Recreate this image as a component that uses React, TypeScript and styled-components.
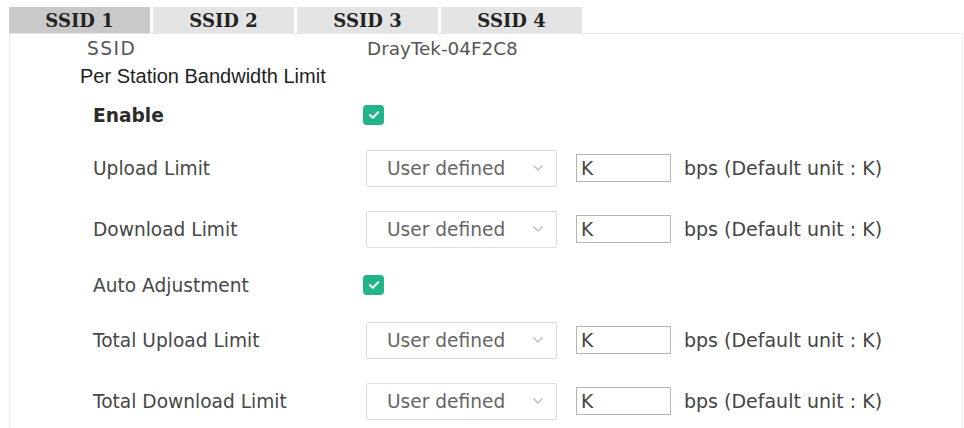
import React from "react";
import styled, { createGlobalStyle } from "styled-components";

const GlobalStyle = createGlobalStyle`
  html, body {
    margin: 0;
    padding: 0;
    background: #ffffff;
  }
  body {
    font-family: "DejaVu Sans", sans-serif;
    width: 964px;
    height: 428px;
    overflow: hidden;
  }
`;

const Page = styled.div`
  padding: 7px 2px 0 9px;
  box-sizing: border-box;
  height: 428px;
`;

const TabBar = styled.div`
  display: flex;
  gap: 3px;
  height: 26px;
`;

const Tab = styled.div<{ $active?: boolean }>`
  width: 141px;
  display: flex;
  align-items: center;
  justify-content: center;
  padding-top: 1px;
  background: ${(p) => (p.$active ? "#c9c9c9" : "#e4e4e4")};
  font-family: "DejaVu Serif", "Liberation Serif", serif;
  font-weight: 700;
  font-size: 18px;
  color: #222;
`;

const Panel = styled.div`
  border-top: 1px solid #e6e6e6;
  border-left: 1px solid #ececec;
  border-right: 1px solid #ececec;
  margin-right: -1px;
  height: 400px;
  box-sizing: border-box;
`;

const Row = styled.div<{ $h: number; $indent?: number }>`
  display: flex;
  align-items: center;
  height: ${(p) => p.$h}px;
  padding-left: ${(p) => p.$indent ?? 83}px;
`;

const Label = styled.div<{ $bold?: boolean }>`
  width: 273px;
  flex: none;
  font-size: 18.6px;
  font-weight: ${(p) => (p.$bold ? 700 : 400)};
  color: ${(p) => (p.$bold ? "#2b2b2b" : "#474747")};
`;

const SsidLabel = styled.div`
  width: 280px;
  font-size: 18.6px;
  letter-spacing: 1.5px;
  color: #555;
`;

const SsidValue = styled.div`
  font-size: 18.4px;
  color: #555;
`;

const SectionTitle = styled.div`
  font-family: "Liberation Sans", Arial, sans-serif;
  font-size: 20px;
  color: #1e1e1e;
`;

const Check = styled.span`
  width: 21px;
  height: 20px;
  margin-left: -3px;
  border-radius: 4px;
  background: #21b48b;
  display: inline-flex;
  align-items: center;
  justify-content: center;
`;

const Select = styled.div`
  width: 191px;
  height: 37px;
  box-sizing: border-box;
  border: 1px solid #dcdcdc;
  border-radius: 2px;
  display: flex;
  align-items: center;
  padding-left: 20px;
  padding-right: 12px;
  font-size: 18.6px;
  color: #666;
  background: #fff;
`;

const SelectText = styled.span`
  flex: 1;
`;

const KInput = styled.div`
  width: 95px;
  height: 28px;
  box-sizing: border-box;
  margin-left: 19px;
  border: 1px solid #b4b4b4;
  display: flex;
  align-items: center;
  padding-left: 4px;
  font-size: 18.6px;
  color: #444;
`;

const Unit = styled.div`
  margin-left: 13px;
  font-size: 19px;
  color: #434343;
`;

const Chevron = () => (
  <svg width="12" height="8" viewBox="0 0 12 8">
    <path d="M1.5 1.5 L6 6 L10.5 1.5" fill="none" stroke="#bcbcbc" strokeWidth="1.4" />
  </svg>
);

const CheckMark = () => (
  <svg width="12" height="10" viewBox="0 0 12 10">
    <path d="M1.8 5 L4.8 7.8 L10.2 2.2" fill="none" stroke="#fff" strokeWidth="2" strokeLinecap="round" strokeLinejoin="round" />
  </svg>
);

const LimitControls = () => (
  <>
    <Select>
      <SelectText>User defined</SelectText>
      <Chevron />
    </Select>
    <KInput>K</KInput>
    <Unit>bps (Default unit : K)</Unit>
  </>
);

const rows = [
  { label: "Upload Limit", h: 56, kind: "limit" },
  { label: "Download Limit", h: 66, kind: "limit" },
  { label: "Auto Adjustment", h: 46, kind: "check" },
  { label: "Total Upload Limit", h: 64, kind: "limit" },
  { label: "Total Download Limit", h: 58, kind: "limit" },
];

export default function App() {
  return (
    <Page>
      <GlobalStyle />
      <TabBar>
        <Tab $active>SSID 1</Tab>
        <Tab>SSID 2</Tab>
        <Tab>SSID 3</Tab>
        <Tab>SSID 4</Tab>
      </TabBar>
      <Panel>
        <Row $h={28} $indent={77}>
          <SsidLabel>SSID</SsidLabel>
          <SsidValue>DrayTek-04F2C8</SsidValue>
        </Row>
        <Row $h={28} $indent={70}>
          <SectionTitle>Per Station Bandwidth Limit</SectionTitle>
        </Row>
        <Row $h={50}>
          <Label $bold>Enable</Label>
          <Check>
            <CheckMark />
          </Check>
        </Row>
        {rows.map((r) => (
          <Row key={r.label} $h={r.h}>
            <Label>{r.label}</Label>
            {r.kind === "check" ? (
              <Check>
                <CheckMark />
              </Check>
            ) : (
              <LimitControls />
            )}
          </Row>
        ))}
      </Panel>
    </Page>
  );
}
